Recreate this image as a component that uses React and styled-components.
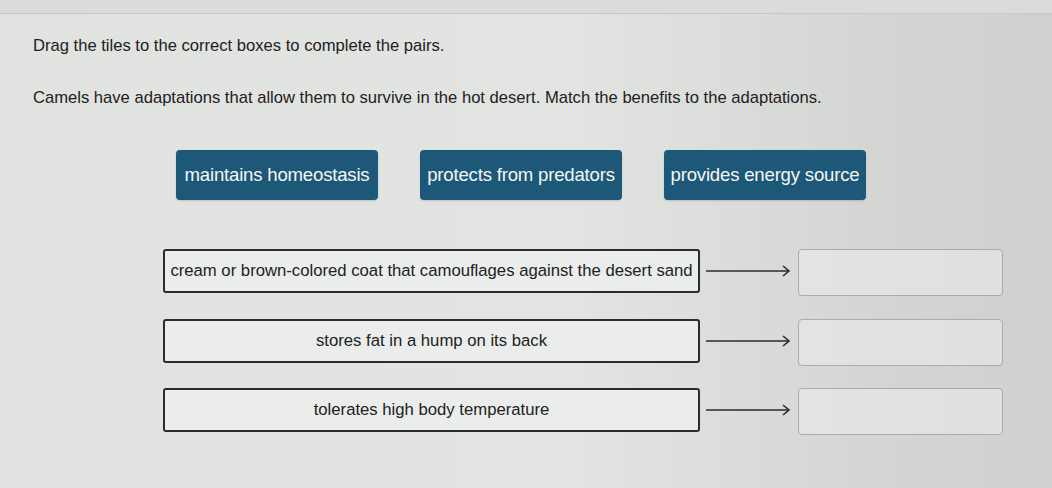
import React from "react";
import styled, { createGlobalStyle } from "styled-components";

const Global = createGlobalStyle`
  html, body { margin: 0; padding: 0; }
  body {
    width: 1052px;
    height: 488px;
    overflow: hidden;
    font-family: "Liberation Sans", Arial, sans-serif;
    background: #dcdfdc;
  }
`;

const Page = styled.div`
  width: 1052px;
  height: 488px;
  box-sizing: border-box;
  background: linear-gradient(90deg, #e0e3e0 0%, #e1e4e1 55%, #d3d5d2 85%, #cfd1ce 100%);
  border-top: 13px solid #dadcd9;
  display: flex;
  flex-direction: column;
  &::before {
    content: "";
    display: block;
    height: 1px;
    background: #c6c8c5;
  }
`;

const Content = styled.div`
  padding: 22px 0 0 33px;
  display: flex;
  flex-direction: column;
`;

const Prompt = styled.p`
  margin: 0;
  font-size: 16.6px;
  line-height: 20px;
  color: #1f2021;
  margin-bottom: ${(p) => p.$gap || 0}px;
`;

const TileRow = styled.div`
  display: flex;
  gap: 42px;
  margin-left: 143px;
  margin-top: 42px;
`;

const Tile = styled.div`
  width: 202px;
  height: 50px;
  box-sizing: border-box;
  background: #1d5878;
  border-radius: 4px;
  color: #f4f7f8;
  font-size: 18.6px;
  letter-spacing: -0.2px;
  display: flex;
  align-items: center;
  justify-content: center;
  white-space: nowrap;
  box-shadow: 0 1px 2px rgba(0, 0, 0, 0.15);
`;

const Pairs = styled.div`
  display: flex;
  flex-direction: column;
  gap: 22.5px;
  margin-left: 130px;
  margin-top: 49px;
`;

const PairRow = styled.div`
  display: flex;
  align-items: flex-start;
`;

const Source = styled.div`
  width: 537px;
  height: 44px;
  box-sizing: border-box;
  border: 2px solid #2b2c2d;
  border-radius: 3px;
  background: #eaedeb;
  color: #222;
  font-size: 16.7px;
  display: flex;
  align-items: center;
  justify-content: center;
  white-space: nowrap;
`;

const Arrow = styled.svg`
  width: 90px;
  height: 16px;
  margin: 14px 4px 0 4px;
  flex: none;
`;

const Target = styled.div`
  width: 205px;
  height: 47px;
  box-sizing: border-box;
  border: 1.5px solid #a9aca9;
  border-radius: 4px;
  background: rgba(236, 239, 236, 0.5);
`;

const tiles = ["maintains homeostasis", "protects from predators", "provides energy source"];

const pairs = [
  "cream or brown-colored coat that camouflages against the desert sand",
  "stores fat in a hump on its back",
  "tolerates high body temperature",
];

const ArrowIcon = () => (
  <Arrow viewBox="0 0 90 16">
    <line x1="2" y1="8" x2="84" y2="8" stroke="#2a2b2c" strokeWidth="1.3" />
    <polyline points="79,3 85,8 79,13" fill="none" stroke="#2a2b2c" strokeWidth="1.6" />
  </Arrow>
);

export default function App() {
  return (
    <>
      <Global />
      <Page>
        <Content>
          <Prompt $gap={32}>Drag the tiles to the correct boxes to complete the pairs.</Prompt>
          <Prompt>
            Camels have adaptations that allow them to survive in the hot desert. Match the benefits to the adaptations.
          </Prompt>
          <TileRow>
            {tiles.map((t) => (
              <Tile key={t}>{t}</Tile>
            ))}
          </TileRow>
          <Pairs>
            {pairs.map((p) => (
              <PairRow key={p}>
                <Source>{p}</Source>
                <ArrowIcon />
                <Target />
              </PairRow>
            ))}
          </Pairs>
        </Content>
      </Page>
    </>
  );
}
